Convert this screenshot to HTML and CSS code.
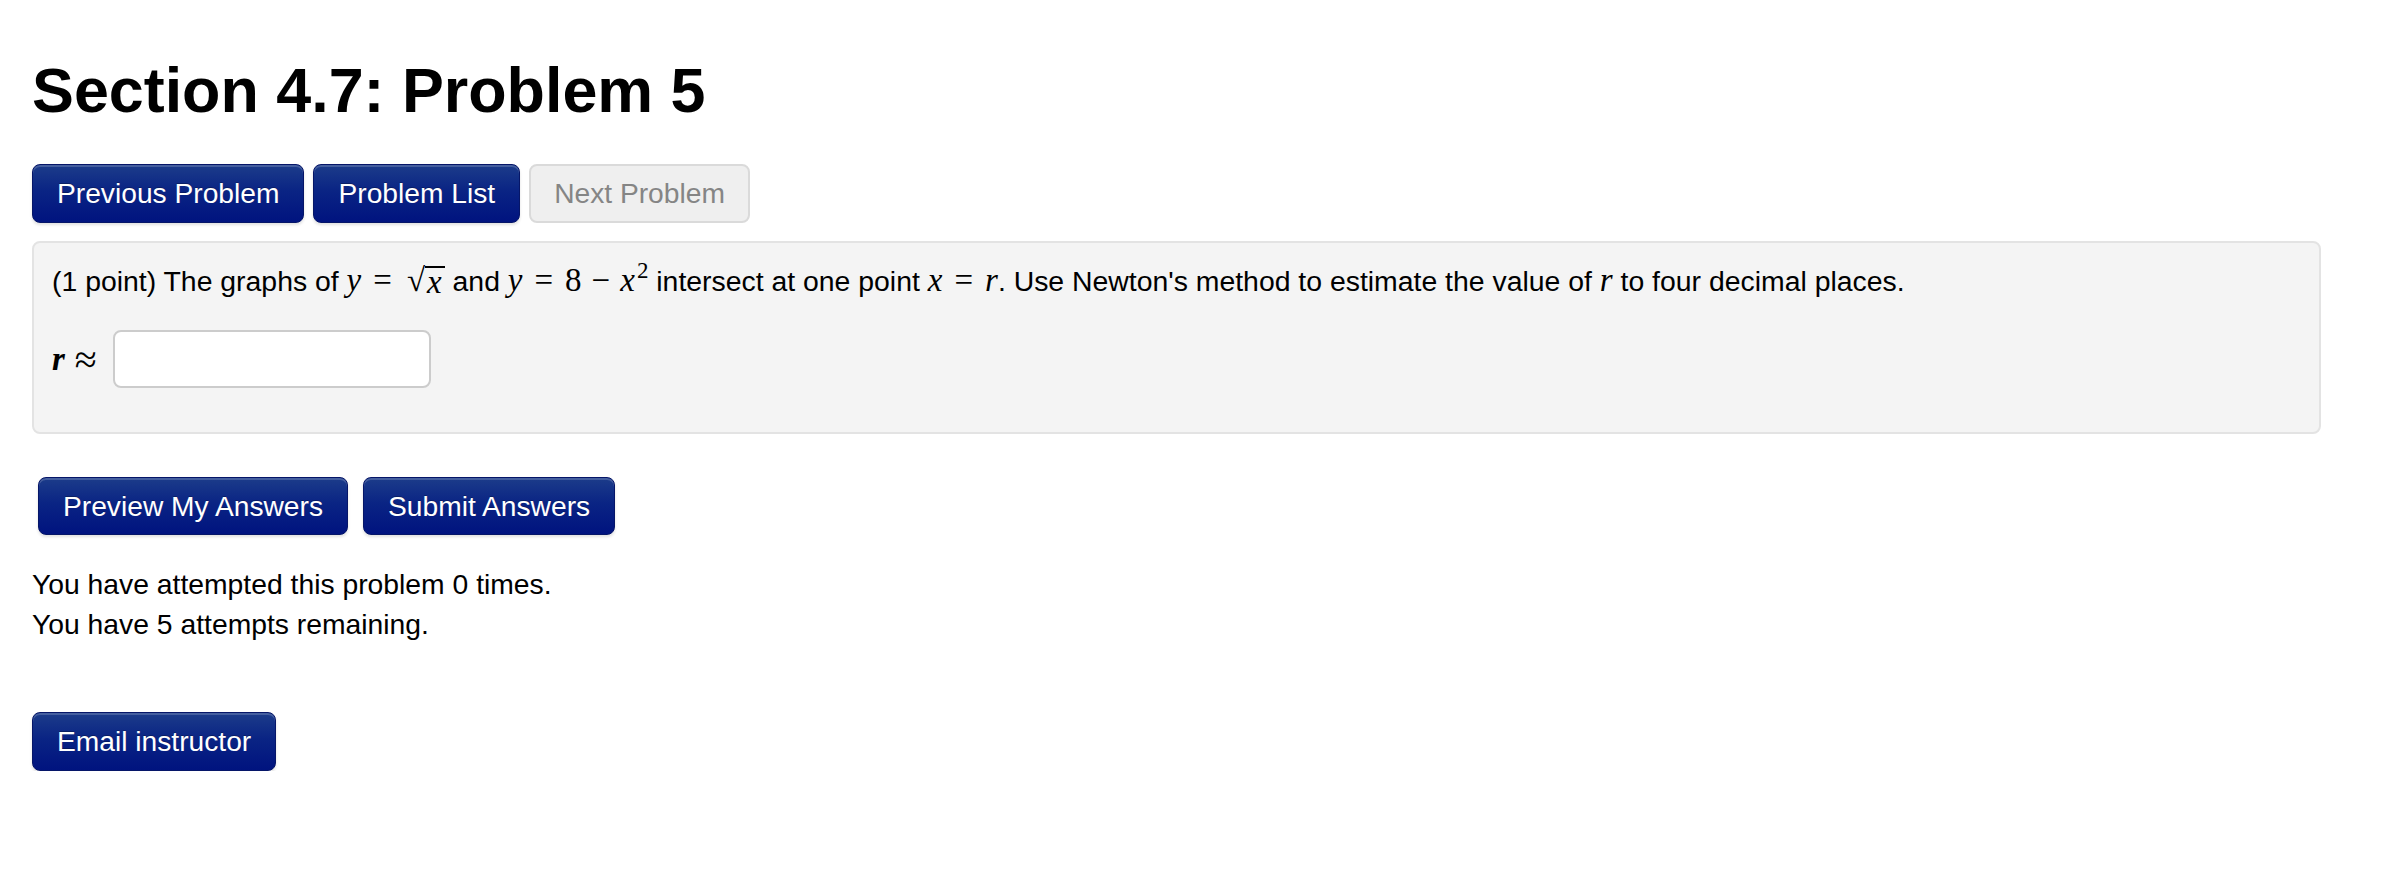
FILE: index.html
```html
<!DOCTYPE html>
<html>
<head>
<meta charset="utf-8">
<link rel="stylesheet" href="styles.css">
</head>
<body>
<div class="page">
  <h1 class="title">Section 4.7: Problem 5</h1>
  <div class="nav">
    <span class="btn btn-primary">Previous Problem</span>
    <span class="btn btn-primary">Problem List</span>
    <span class="btn btn-disabled">Next Problem</span>
  </div>
  <div class="problem">
    <p class="statement">(1 point) The graphs of <span class="math"><i>y</i><span class="op">=</span><span class="sqrt"><span class="radical">√</span><span class="radicand"><i>x</i></span></span></span> and <span class="math"><i>y</i><span class="op">=</span>8<span class="bin">−</span><i class="xv">x</i><sup>2</sup></span> intersect at one point <span class="math"><i>x</i><span class="op">=</span><i>r</i></span>. Use Newton's method to estimate the value of <span class="math"><i>r</i></span> to four decimal places.</p>
    <div class="answer-row">
      <span class="math ans-label"><i>r</i><span class="approx">≈</span></span>
      <input class="answer" type="text">
    </div>
  </div>
  <div class="submit-row">
    <span class="btn btn-primary">Preview My Answers</span>
    <span class="btn btn-primary">Submit Answers</span>
  </div>
  <div class="attempts">
    <div>You have attempted this problem 0 times.</div>
    <div>You have 5 attempts remaining.</div>
  </div>
  <div class="email-row">
    <span class="btn btn-primary">Email instructor</span>
  </div>
</div>
</body>
</html>
```

FILE: styles.css
```css
html, body {
  margin: 0;
  padding: 0;
  background: #ffffff;
}

body {
  font-family: "Liberation Sans", Arial, Helvetica, sans-serif;
  font-size: 28.3px;
  line-height: 39px;
  color: #000000;
}

.page {
  padding-left: 32px;
  width: 2289px;
}

.title {
  margin: 51px 0 0 0;
  font-size: 62.8px;
  line-height: 78px;
  font-weight: bold;
}

.nav {
  display: flex;
  gap: 9px;
  margin-top: 35px;
}

.btn {
  display: inline-flex;
  align-items: center;
  justify-content: center;
  box-sizing: border-box;
  height: 59px;
  padding: 0 24px;
  border-radius: 8px;
  font-size: 28.2px;
  white-space: nowrap;
}

.btn-primary {
  color: #ffffff;
  background: linear-gradient(to bottom, #1c3c8a 0%, #0a2484 45%, #00137f 100%);
  border: 1px solid #061668;
  box-shadow: inset 0 2px 0 rgba(255, 255, 255, 0.18), 0 2px 3px rgba(0, 0, 0, 0.12);
  text-shadow: 0 -1px 0 rgba(0, 0, 0, 0.25);
}

.btn-disabled {
  color: #858585;
  background: #efefef;
  border: 2px solid #dadada;
  padding: 0 23px;
}

.problem {
  margin-top: 18px;
  box-sizing: border-box;
  height: 193px;
  background: #f4f4f4;
  border: 2px solid #e3e3e3;
  border-radius: 8px;
  padding: 18px 19px 0 18px;
}

.statement {
  margin: 0;
  font-size: 28.4px;
  line-height: 39px;
}

.math {
  font-family: "Liberation Serif", "Times New Roman", serif;
  font-size: 33px;
  white-space: nowrap;
}

.math i {
  font-style: italic;
}

.math i.xv {
  margin-right: 2px;
}

.op {
  margin: 0 12px;
}

.bin {
  margin: 0 10px;
}

.sqrt {
  display: inline-flex;
  align-items: flex-end;
  margin-left: 3px;
}

.radical {
  font-size: 33px;
  line-height: 32px;
}

.radicand {
  border-top: 2px solid #000000;
  padding: 0 3px 0 2px;
  line-height: 28px;
  margin-top: 2px;
}

.math sup {
  font-size: 23px;
  line-height: 0;
  vertical-align: 13px;
  margin-left: 0;
}

.answer-row {
  display: flex;
  align-items: center;
  margin-top: 29px;
  gap: 16px;
}

.ans-label {
  display: inline-flex;
  align-items: center;
  font-size: 33px;
}

.ans-label i {
  font-weight: bold;
}

.approx {
  font-size: 40px;
  margin-left: 10px;
}

.answer {
  box-sizing: border-box;
  width: 318px;
  height: 58px;
  border: 2px solid #cccccc;
  border-radius: 8px;
  background: #ffffff;
  margin: 0;
  padding: 0 12px;
}

.submit-row {
  display: flex;
  gap: 15px;
  margin-top: 43px;
  padding-left: 6px;
}

.submit-row .btn {
  height: 58px;
}

.attempts {
  margin-top: 29px;
  line-height: 40px;
}

.email-row {
  display: flex;
  margin-top: 68px;
}
```
